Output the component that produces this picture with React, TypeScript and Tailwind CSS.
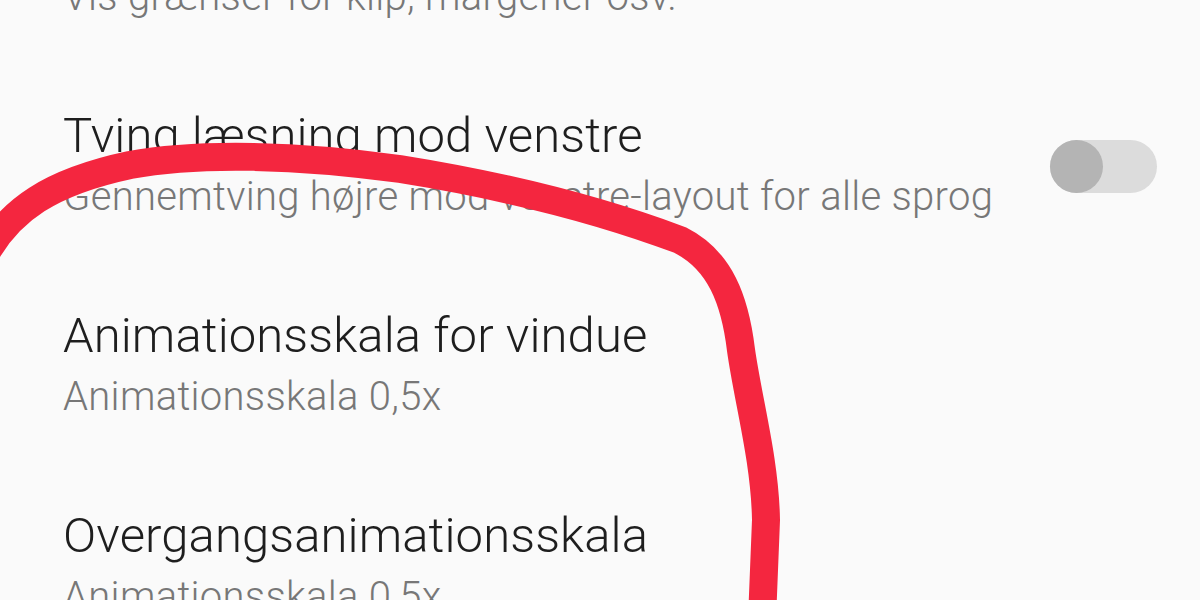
import React from "react";

const rows = [
  { title: "Vis layoutgrænser", sub: "Vis grænser for klip, margener osv.", toggle: false },
  { title: "Tving læsning mod venstre", sub: "Gennemtving højre mod venstre-layout for alle sprog", toggle: true },
  { title: "Animationsskala for vindue", sub: "Animationsskala 0,5x", toggle: false },
  { title: "Overgangsanimationsskala", sub: "Animationsskala 0,5x", toggle: false },
];

export default function App() {
  return (
    <div
      className="relative w-[1200px] h-[600px] overflow-hidden bg-[#fafafa]"
      style={{ fontFamily: "Roboto, 'Noto Sans', sans-serif" }}
    >
      <div className="-mt-[92px] flex flex-col">
        {rows.map((r, i) => (
          <div key={i} className="h-[200px] flex flex-row pl-[63px] pr-[43px]">
            <div className="flex-1 flex flex-col">
              <div className="text-[49px] leading-[56px] font-light text-[#1e1e1e] whitespace-nowrap tracking-[0.1px]">
                {r.title}
              </div>
              <div className="mt-[8px] text-[40px] leading-[49px] font-light text-[#777777] whitespace-nowrap tracking-[0.3px]">
                {r.sub}
              </div>
            </div>
            {r.toggle && (
              <div className="mt-[32px] w-[107px] h-[53px] rounded-full bg-[#dcdcdc] flex items-center">
                <div className="w-[53px] h-[53px] rounded-full bg-[#b4b4b4]" />
              </div>
            )}
          </div>
        ))}
      </div>
      <svg
        className="absolute inset-0 pointer-events-none"
        width="1200"
        height="600"
        viewBox="0 0 1200 600"
      >
        <path
          d="M -15 255 C 10 210, 50 182, 130 165 C 200 152, 300 155, 400 169 C 500 185, 600 210, 680 240 C 720 260, 735 300, 741 350 C 748 400, 765 460, 766 520 L 762 620"
          fill="none"
          stroke="#f4263f"
          strokeWidth="28"
          strokeLinecap="round"
          strokeLinejoin="round"
        />
      </svg>
    </div>
  );
}
